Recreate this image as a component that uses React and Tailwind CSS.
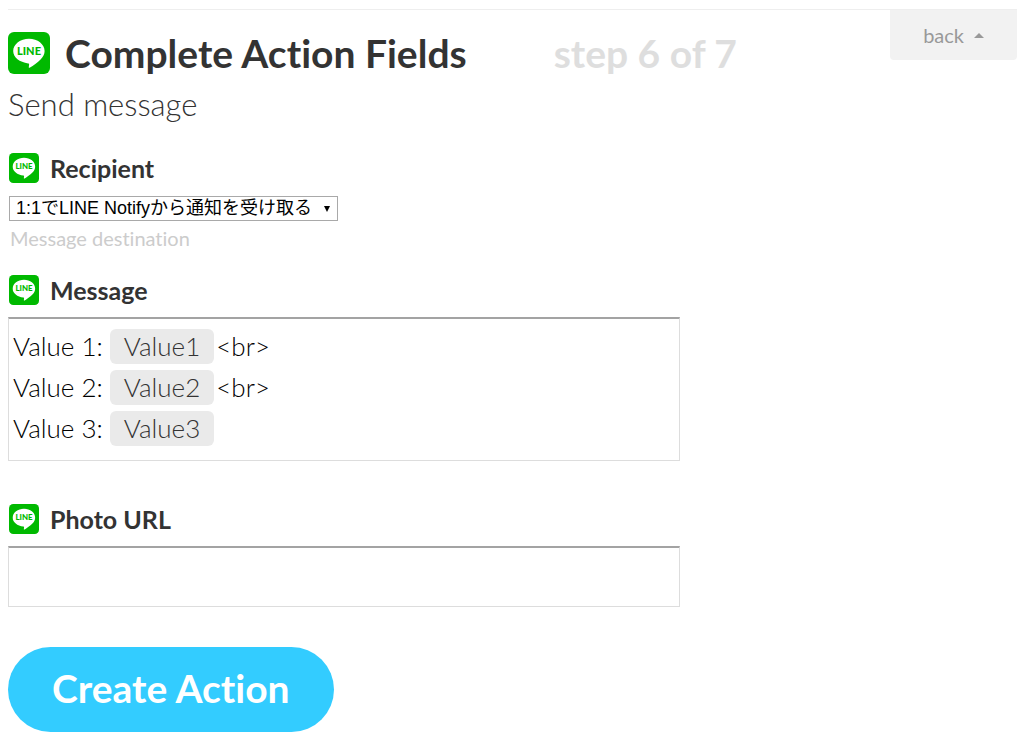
import React, { useState } from 'react'

// Action setup form, step 6: recipient, message body and photo for a LINE message.

const RECIPIENTS = ['1:1でLINE Notifyから通知を受け取る']

const MESSAGE_LINES = [
  { label: 'Value 1:', ingredient: 'Value1', tail: '<br>' },
  { label: 'Value 2:', ingredient: 'Value2', tail: '<br>' },
  { label: 'Value 3:', ingredient: 'Value3', tail: '' },
]

function LineLogo({ className }) {
  return (
    <svg viewBox="0 0 42 42" className={`shrink-0 ${className}`} aria-hidden="true">
      <rect width="42" height="42" rx="6" fill="#00b900" />
      <path
        d="M21 6.8c8.6 0 15.6 5.5 15.6 12.3 0 3-1.3 5.7-3.8 8.2-3.3 3.3-7.6 6.4-10.8 8.3-1 .5-1.3.1-1.2-.7l.3-2.4c.1-.7-.2-1-.9-1.1C11.6 30.4 5.2 25.4 5.2 19.1 5.2 12.3 12.4 6.800 21 6.800z"
        fill="#fff"
      />
      <text
        x="21"
        y="23"
        textAnchor="middle"
        fontSize="11"
        fill="#00b900"
        className="font-[Lato,sans-serif] font-black"
      >
        LINE
      </text>
    </svg>
  )
}

function FieldTitle({ children, ...rest }) {
  return (
    <div className="flex items-center gap-[11px] pl-px">
      <LineLogo className="w-[30px] h-[30px]" />
      <label className="text-[25px] leading-[30px] font-bold" {...rest}>{children}</label>
    </div>
  )
}

export default function App() {
  const [recipient, setRecipient] = useState(RECIPIENTS[0])
  const [photoUrl, setPhotoUrl] = useState('')

  return (
    <main className="px-2 pt-[9px] pb-[9px] bg-white text-[#333] font-[Lato,'Noto_Sans_CJK_JP',sans-serif] [font-variant-ligatures:none]">
      {/* Header */}
      <header className="flex items-start justify-between -mr-px border-t border-[#eee]">
        <div className="flex items-center pt-[19px]">
          <LineLogo className="w-[42px] h-[42px] mr-[15px]" />
          <h1 className="text-[39px] leading-[48px] font-bold">Complete Action Fields</h1>
          <span className="ml-[87px] text-[39px] leading-[48px] font-bold text-[#dedede]">step 6 of 7</span>
        </div>
        <button className="flex items-center gap-[10px] h-[50px] px-[33px] rounded-b bg-[#f2f2f2] text-xl text-[#999]">
          back
          <svg viewBox="0 0 10 5" className="w-[10px] h-[5px]" aria-hidden="true">
            <path d="M0 5L5 0l5 5z" fill="#999" />
          </svg>
        </button>
      </header>
      <h2 className="mt-2 text-[31px] leading-[38px] font-light">Send message</h2>

      <form onSubmit={e => e.preventDefault()}>
        {/* Recipient */}
        <section className="mt-[30px]">
          <FieldTitle htmlFor="recipient">Recipient</FieldTitle>
          <div className="relative w-fit mt-[13px] ml-px">
            <select
              id="recipient"
              value={recipient}
              onChange={e => setRecipient(e.target.value)}
              className="block appearance-none h-[25px] pl-[6px] pr-6 border border-[#a9a9a9] bg-white text-black text-[18px] leading-[23px] font-['Liberation_Sans','Noto_Sans_CJK_JP',sans-serif]"
            >
              {RECIPIENTS.map(r => <option key={r}>{r}</option>)}
            </select>
            <svg viewBox="0 0 6 6" className="absolute right-2 top-[10px] w-[6px] h-[6px] pointer-events-none" aria-hidden="true">
              <path d="M0 0h6L3 6z" fill="#000" />
            </svg>
          </div>
          <p className="mt-1 ml-[2px] text-xl leading-[26px] text-[#ccc]">Message destination</p>
        </section>

        {/* Message */}
        <section className="mt-6">
          <FieldTitle id="message-title">Message</FieldTitle>
          <div
            role="textbox"
            aria-multiline="true"
            aria-labelledby="message-title"
            contentEditable
            suppressContentEditableWarning
            className="w-2/3 h-36 mt-3 px-1 pt-[7px] border border-t-2 border-[#ddd] border-t-[#a3a3a3] text-[26px] leading-[41px] font-light text-black outline-none"
          >
            {MESSAGE_LINES.map(line => (
              <div key={line.ingredient} className="flex items-center h-[41px]">
                <span className="mr-[7px]">{line.label}</span>
                <span className="px-[14px] mr-[2px] rounded-md bg-[#eaeaea] leading-[35px] text-[#333]">{line.ingredient}</span>
                <span>{line.tail}</span>
              </div>
            ))}
          </div>
        </section>

        {/* Photo URL */}
        <section className="mt-[43px]">
          <FieldTitle htmlFor="photo-url">Photo URL</FieldTitle>
          <input
            id="photo-url"
            type="text"
            value={photoUrl}
            onChange={e => setPhotoUrl(e.target.value)}
            className="block w-2/3 h-[61px] mt-3 px-1 border border-t-2 border-[#ddd] border-t-[#a3a3a3] text-[26px] font-light text-black outline-none"
          />
        </section>

        <button type="submit" className="mt-10 h-[85px] px-11 pb-[3px] rounded-full bg-[#33ccff] text-white text-[39px] leading-[48px] font-bold">
          Create Action
        </button>
      </form>
    </main>
  )
}
